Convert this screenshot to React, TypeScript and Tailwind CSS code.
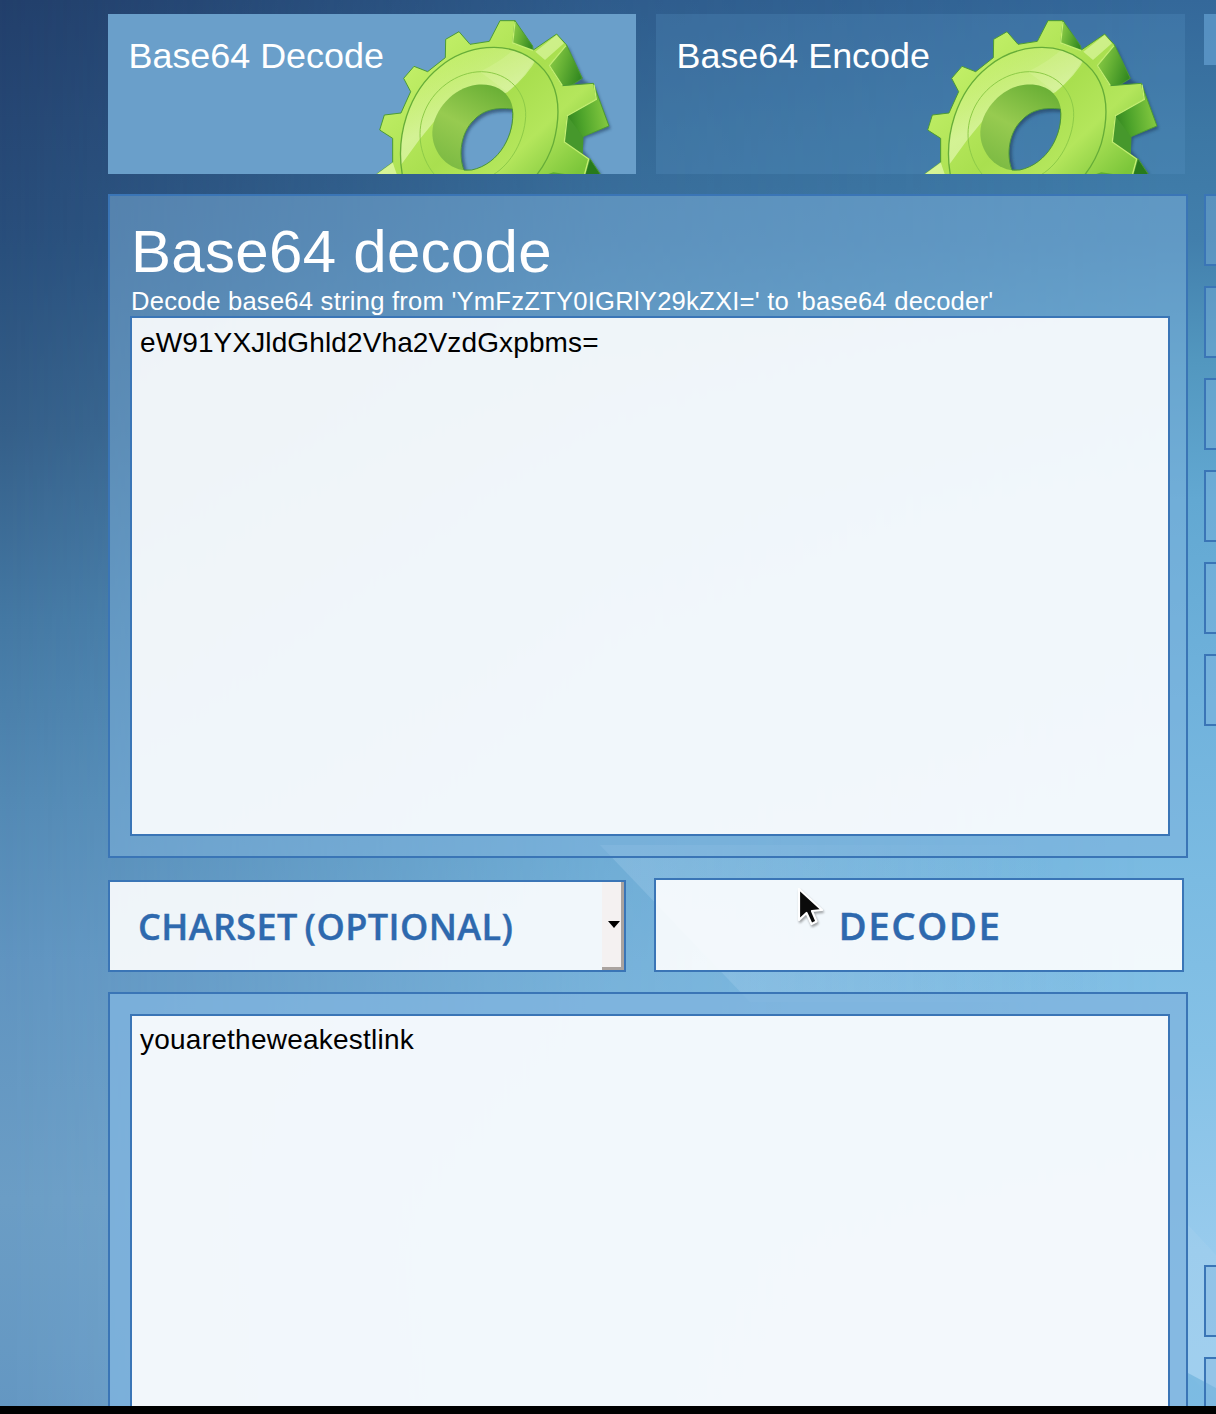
import React from "react";

function Gear({ id }: { id: string }) {
  const hole = "M312,510 C294,465 303,398 340,362 C370,328 410,322 457,327 C466,400 420,492 335,510 Z";
  const face =
    "M50,522 L98,487 L98,415 L59,390 L73,345 L123,339 L152,275 L131,235 L162,199 L203,215 L256,173 L257,118 L297,95 L330,133 L388,124 L420,62 L465,62 L458,129 L520,150 L590,102 L620,135 L568,197 L607,257 L700,250 L710,298 L622,347 L613,426 L688,477 L674,530 L50,530 Z";
  const ring =
    "M128,530 C105,410 145,275 240,200 C320,135 440,120 520,180 C600,240 607,330 580,430 C568,468 550,500 526,530";
  return (
    <svg className="h-[160px] w-[276px] shrink-0" viewBox="0 42 828 480" aria-hidden="true">
      <defs>
        <linearGradient id={id + "f"} gradientUnits="userSpaceOnUse" x1="250" y1="120" x2="640" y2="530">
          <stop offset="0" stopColor="#c0ee66" />
          <stop offset="0.45" stopColor="#a9df4f" />
          <stop offset="0.7" stopColor="#b4e65c" />
          <stop offset="1" stopColor="#7cc63a" />
        </linearGradient>
        <linearGradient id={id + "s"} x1="0" y1="0.2" x2="1" y2="0.6">
          <stop offset="0" stopColor="#8fcf47" />
          <stop offset="0.5" stopColor="#62ae33" />
          <stop offset="1" stopColor="#348a21" />
        </linearGradient>
        <linearGradient id={id + "t"} x1="0" y1="0.3" x2="1" y2="0.1">
          <stop offset="0" stopColor="#2b7d1d" />
          <stop offset="0.4" stopColor="#4ea42b" />
          <stop offset="1" stopColor="#8fd044" />
        </linearGradient>
        <linearGradient id={id + "b"} x1="0.7" y1="0" x2="0.2" y2="1">
          <stop offset="0" stopColor="#6bb036" />
          <stop offset="0.5" stopColor="#97cb50" />
          <stop offset="1" stopColor="#7ab942" />
        </linearGradient>
        <linearGradient id={id + "g"} gradientUnits="userSpaceOnUse" x1="210" y1="190" x2="290" y2="340">
          <stop offset="0" stopColor="#eeffa8" stopOpacity="0.12" />
          <stop offset="1" stopColor="#f4ffd0" stopOpacity="0.5" />
        </linearGradient>
        <filter id={id + "d"} x="-10%" y="-10%" width="120%" height="120%">
          <feGaussianBlur stdDeviation="5" />
        </filter>
        <mask id={id + "m"} maskUnits="userSpaceOnUse" x="0" y="0" width="828" height="540">
          <rect width="828" height="540" fill="#fff" />
          <path d={hole} fill="#000" />
        </mask>
        <clipPath id={id + "c"}>
          <path d={ring} />
        </clipPath>
        <clipPath id={id + "h"}>
          <path d={hole} />
        </clipPath>
      </defs>
      <g clipPath={"url(#" + id + "h)"}>
        <path d="M312,520 C290,450 305,390 340,362 C370,330 410,320 470,327" fill="none" stroke="#203a5c" strokeOpacity="0.6" strokeWidth="20" filter={"url(#" + id + "d)"} />
      </g>
      <g mask={"url(#" + id + "m)"}>
        <path d="M625,140 L671,240 L706,262 L752,386 L676,414 L670,450 L726,526 L600,526 L560,240 Z" fill="#1d3858" opacity="0.55" filter={"url(#" + id + "d)"} />
        <g stroke="#4c9a35" strokeWidth="3" strokeLinejoin="round">
          <path d="M465,62 L518,138 L520,152 L457,130 Z" fill={"url(#" + id + "s)"} />
          <path d="M620,135 L667,235 L634,256 L607,258 L566,197 Z" fill={"url(#" + id + "s)"} />
          <path d="M613,345 L710,298 L700,250 L747,378 L669,410 L667,462 L600,430 Z" fill={"url(#" + id + "t)"} />
          <path d="M622,347 L669,410 L667,462 L612,426 Z" fill="#46982c" stroke="none" />
          <path d="M690,476 L726,530 L672,530 Z" fill="#287a1c" />
          <path d={face} fill={"url(#" + id + "f)"} />
        </g>
        <path d="M465,66 L458,129 L520,152 M618,137 L568,197 L607,257 M702,254 L709,298 L622,347 L613,426 L686,477 L674,522" fill="none" stroke="#c4ef70" strokeWidth="4" />
        <path d="M526,155 L590,105 L612,130 L555,180 Z" fill="#efffc0" opacity="0.5" />
        <path d="M50,522 L98,487 L110,522 Z" fill="#efffc0" opacity="0.6" />
        <g clipPath={"url(#" + id + "c)"}>
          <path d="M90,535 L130,485 Q175,420 228,358 Q320,335 442,277 Q505,225 533,170 L440,80 L80,100 Z" fill={"url(#" + id + "g)"} />
          <path d="M360,215 Q430,180 470,140 L500,150 L520,185 Q490,235 442,277 Z" fill="#f5ffd0" opacity="0.15" />
        </g>
        <path d={ring} fill="none" stroke="#66ad38" strokeWidth="4" />
        <path d="M222,522 C180,470 170,400 190,345 C215,270 290,215 365,215 C450,217 500,280 497,350 C493,420 455,490 400,524" fill="none" stroke="#8ecb48" strokeWidth="3" />
        <path d="M320,512 C250,506 215,445 217,395 C220,330 280,262 350,254 C412,248 457,280 460,340 C462,410 415,500 320,512 Z" fill={"url(#" + id + "b)"} />
        <path d="M565,522 L580,517 L615,522 Z" fill="#5fad31" />
      </g>
      <path d={hole} fill="none" stroke="#4a943a" strokeWidth="3" />
    </svg>
  );
}

function Cursor() {
  return (
    <svg className="absolute left-[140px] top-[6px] h-[42px] w-[30px] drop-shadow-[1px_2px_1px_rgba(0,0,0,0.35)]" viewBox="0 0 30 42" aria-hidden="true">
      <path d="M3,3 L3,34 L10.500,27 L15.500,38 L20.500,35.500 L16,25 L26,24 Z" fill="#0a0a0a" stroke="#fff" strokeWidth="2.200" strokeLinejoin="round" />
    </svg>
  );
}

const box = "h-[72px] shrink-0 border-2 border-r-0 border-[#3a75b6] bg-[#80b4de]/40";

export default function App() {
  return (
    <div className="relative isolate flex h-[1414px] w-[1216px] flex-col overflow-hidden font-['Liberation_Sans',Arial,sans-serif]">
      <div className="absolute inset-0 -z-10 bg-[linear-gradient(180deg,#223f6b_0px,#264774_120px,#294f7c_250px,#355f89_430px,#4478a3_620px,#5389b4_800px,#6094c0_960px,#6b9dc5_1200px,#6497c2_1414px)]" />
      <div className="absolute inset-0 -z-10 bg-[linear-gradient(180deg,#34689a_0px,#3c77a4_130px,#427fac_240px,#5297bf_360px,#62a8d2_500px,#70b2dc_700px,#7bbbe2_880px,#85c1e6_1050px,#98cbed_1250px,#9dceef_1414px)] [mask-image:linear-gradient(90deg,transparent_0px,rgba(0,0,0,0.1)_100px,rgba(0,0,0,0.7)_600px,black_1160px)]" />
      <svg className="absolute inset-0 -z-10 h-full w-full" viewBox="0 0 1216 1414" aria-hidden="true">
        <defs>
          <linearGradient id="ray" gradientUnits="userSpaceOnUse" x1="680" y1="930" x2="1000" y2="760">
            <stop offset="0" stopColor="#b4d7f2" stopOpacity="0.25" />
            <stop offset="1" stopColor="#b4d7f2" stopOpacity="0" />
          </linearGradient>
        </defs>
        <path d="M600,845 L750,1002 L1190,1002 L1190,845 Z" fill="url(#ray)" />
        <path d="M1188,1225 L1216,1255 V1400 L1188,1375 Z" fill="#b4d7f2" opacity="0.2" />
        <path d="M1188,1373 L1216,1388 V1414 H1188 Z" fill="#68afdb" opacity="0.6" />
      </svg>

      <div className="flex h-[1406px] shrink-0 gap-4 overflow-hidden pl-[108px] pt-[14px]">
        <main className="flex w-[1080px] shrink-0 flex-col">
          <nav className="flex h-[160px] shrink-0 gap-5">
            <div className="flex w-[528px] justify-between overflow-hidden bg-[#6a9fca] pl-[20.500px] text-white">
              <span className="w-0 whitespace-nowrap pt-[21px] text-[35.900px] leading-[42px]">Base64 Decode</span>
              <Gear id="a" />
            </div>
            <div className="flex w-[529px] justify-between overflow-hidden bg-[#5c97c8]/25 pl-[20.500px] pr-px text-white">
              <span className="w-0 whitespace-nowrap pt-[21px] text-[35.900px] leading-[42px]">Base64 Encode</span>
              <Gear id="b" />
            </div>
          </nav>

          <section className="mt-5 flex h-[664px] shrink-0 flex-col border-2 border-[#3a75b6] bg-[#80b4de]/50 pb-5 pl-5 pr-4 text-white">
            <h1 className="mt-[22px] h-[68px] whitespace-nowrap pl-px text-[60px] leading-[68px] tracking-[0.300px]">Base64 decode</h1>
            <p className="h-[30px] whitespace-nowrap pl-px text-[25.600px] leading-[31px] tracking-[0.230px]">Decode base64 string from 'YmFzZTY0IGRlY29kZXI=' to 'base64 decoder'</p>
            <div className="grow border-2 border-[#3a75b6] bg-white/90 px-2 pt-[9px] text-[28px] leading-[32px] tracking-[0.120px] text-black">eW91YXJldGhld2Vha2VzdGxpbms=</div>
          </section>

          <div className="mt-5 flex h-[94px] shrink-0 items-end gap-[28px] font-['Open_Sans','Noto_Sans',sans-serif] font-semibold text-[#2e69ae]">
            <div className="flex h-[92px] w-[518px] justify-between border-2 border-[#3a75b6] bg-white/90">
              <span className="whitespace-nowrap pl-[28px] pt-[23px] text-[36px] leading-[44px] tracking-[0.420px] [-webkit-text-stroke:0.4px_#2e69ae] [word-spacing:-3px]">CHARSET (OPTIONAL)</span>
              <div className="flex w-[22px] items-center justify-end border-b-[3px] border-r-[3px] border-[#aaa39f] bg-[#f4f1f1]">
                <svg className="h-[8px] w-[14px]" viewBox="0 0 14 8"><path d="M1,0 H13 L7,7 Z" fill="#000" /></svg>
              </div>
            </div>
            <div className="relative flex h-[94px] w-[530px] justify-center border-2 border-[#3a75b6] bg-white/90">
              <span className="pl-[2px] pt-[23px] text-[38.500px] leading-[44px] tracking-[1.500px] [-webkit-text-stroke:0.4px_#2e69ae]">DECODE</span>
              <Cursor />
            </div>
          </div>

          <section className="mt-5 flex h-[440px] shrink-0 flex-col border-2 border-[#3a75b6] bg-[#80b4de]/80 pl-5 pr-4 pt-5">
            <div className="grow border-2 border-[#3a75b6] bg-white/90 px-2 pt-[8px] text-[28px] leading-[32px] tracking-[0.240px] text-black">youaretheweakestlink</div>
          </section>
        </main>

        <aside className="flex w-3 shrink-0 flex-col">
          <div className="h-[51px] shrink-0 bg-[#5f9acb]/80" />
          <div className="mt-[129px] flex flex-col gap-5">
            <div className={box} />
            <div className={box} />
            <div className={box} />
            <div className={box} />
            <div className={box} />
            <div className={box} />
          </div>
          <div className="mt-[539px] flex flex-col gap-5">
            <div className={box} />
            <div className={box} />
          </div>
        </aside>
      </div>
      <footer className="h-2 shrink-0 bg-black" />
    </div>
  );
}
